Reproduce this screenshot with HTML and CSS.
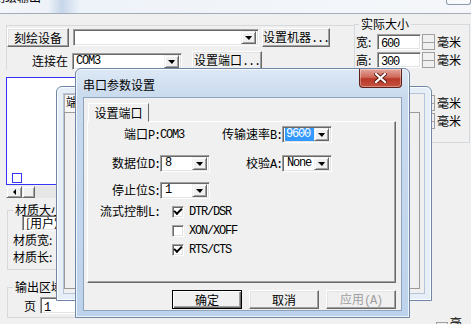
FILE: index.html
```html
<!DOCTYPE html>
<html lang="zh-CN">
<head>
  <meta charset="UTF-8" />
  <link rel="stylesheet" href="styles.css">
  <title>刻绘输出</title>
</head>
<body>
  <div class="mainwin">
    <div class="caption">
      <span class="caption-text">刻绘输出</span>
      <span class="caption-btn"></span>
    </div>

    <div class="client">
      <div class="leftcol">
        <div class="devbox">
          <div class="row">
            <button class="btn w-dev">刻绘设备</button>
            <div class="combo w-devsel"><span class="combo-text"></span><span class="drop"></span></div>
            <button class="btn w-setdev">设置机器<span class="lat">...</span></button>
          </div>
          <div class="row r-port">
            <span class="lbl w-conn">连接在</span>
            <div class="combo w-port"><span class="combo-text lat">COM3</span><span class="drop"></span></div>
            <button class="btn w-setport">设置端口<span class="lat">...</span></button>
          </div>
        </div>

        <div class="preview"><span class="marker"></span></div>
        <div class="hscroll"><span class="sb-arrow"></span><span class="sb-thumb"></span></div>

        <fieldset class="group g-mat">
          <legend>材质大小</legend>
          <div class="edit w-mat">[用户定义]</div>
          <div class="frow">材质宽:</div>
          <div class="frow">材质长:</div>
        </fieldset>

        <fieldset class="group g-out">
          <legend>输出区域</legend>
          <div class="frow r-page">
            <span class="lbl w-page">页</span>
            <div class="edit w-pagenum"><span class="lat">1</span></div>
          </div>
        </fieldset>
      </div>

      <div class="rightcol">
        <fieldset class="group g-size">
          <legend>实际大小</legend>
          <div class="srow">
            <span class="lbl w-dim">宽:</span>
            <div class="edit w-num"><span class="lat">600</span></div>
            <span class="spin"></span>
            <span class="unit">毫米</span>
          </div>
          <div class="srow">
            <span class="lbl w-dim">高:</span>
            <div class="edit w-num"><span class="lat">300</span></div>
            <span class="spin"></span>
            <span class="unit">毫米</span>
          </div>
          <div class="srow r-gap">
            <span class="lbl w-dim">宽:</span>
            <div class="edit w-num"></div>
            <span class="spin"></span>
            <span class="unit">毫米</span>
          </div>
          <div class="srow">
            <span class="lbl w-dim">高:</span>
            <div class="edit w-num"></div>
            <span class="spin"></span>
            <span class="unit">毫米</span>
          </div>
        </fieldset>
        <div class="srow r-bottom">
          <span class="spin"></span>
          <span class="unit">毫米</span>
        </div>
      </div>
    </div>
  </div>

  <!-- window left behind the port dialog -->
  <div class="dlg dlg-back">
    <div class="back-client">
      <div class="back-tab">端口</div>
      <div class="back-page"></div>
    </div>
  </div>

  <div class="dlg dlg-front">
    <div class="dlg-title">
      <span>串口参数设置</span>
      <span class="close-btn">
        <svg width="13" height="10" viewBox="0 0 13 10">
          <path d="M2 1 L11 9 M11 1 L2 9" stroke="#5a1a14" stroke-width="4" stroke-linecap="square"/>
          <path d="M2 1 L11 9 M11 1 L2 9" stroke="#fff" stroke-width="2.2" stroke-linecap="square"/>
        </svg>
      </span>
    </div>

    <div class="dlg-client">
      <div class="tabs">
        <div class="tab">设置端口</div>
      </div>
      <div class="tabpage">
        <div class="prow">
          <span class="plbl">端口<span class="lat">P:</span></span>
          <span class="pval lat">COM3</span>
          <span class="plbl">传输速率<span class="lat">B:</span></span>
          <div class="combo"><span class="combo-text has-sel"><span class="sel lat">9600</span></span><span class="drop"></span></div>
        </div>
        <div class="prow r2">
          <span class="plbl">数据位<span class="lat">D:</span></span>
          <div class="combo"><span class="combo-text lat">8</span><span class="drop"></span></div>
          <span class="plbl">校验<span class="lat">A:</span></span>
          <div class="combo"><span class="combo-text lat">None</span><span class="drop"></span></div>
        </div>
        <div class="prow r3">
          <span class="plbl">停止位<span class="lat">S:</span></span>
          <div class="combo"><span class="combo-text lat">1</span><span class="drop"></span></div>
        </div>
        <div class="prow r4">
          <span class="plbl">流式控制<span class="lat">L:</span></span>
          <label class="check"><span class="chk on"></span><span class="lat">DTR/DSR</span></label>
        </div>
        <div class="prow r5">
          <span></span>
          <label class="check"><span class="chk"></span><span class="lat">XON/XOFF</span></label>
        </div>
        <div class="prow r5">
          <span></span>
          <label class="check"><span class="chk on"></span><span class="lat">RTS/CTS</span></label>
        </div>
      </div>

      <div class="dlg-buttons">
        <button class="btn dbtn default">确定</button>
        <button class="btn dbtn">取消</button>
        <button class="btn dbtn disabled">应用<span class="lat">(A)</span></button>
      </div>
    </div>
  </div>
</body>
</html>
```

FILE: styles.css
```css
* {
  box-sizing: border-box;
}
html, body {
  margin: 0;
}
body {
  width: 471px;
  height: 324px;
  overflow: hidden;
  position: relative;
  background: #f0f0f0;
  font: 12px/14px "Noto Sans CJK SC", sans-serif;
  color: #000;
}
.lat {
  font-family: "Liberation Mono", monospace;
  font-size: 12px;
  letter-spacing: -1.2px;
}

/* main window */
.mainwin {
  height: 324px;
  overflow: hidden;
}
.caption {
  height: 14px;
  display: flex;
  align-items: flex-start;
  overflow: hidden;
  border-bottom: 1px solid #a3adb9;
  background: linear-gradient(90deg, #f3f6fa 0, #eef2f8 48px, #c6d6ea 62px, #eef3f9 80px, #f5f7fa 100%);
}
.caption-text {
  margin: -10px 0 0 -7px;
  line-height: 14px;
}
.caption-btn {
  margin-left: auto;
  width: 25px;
  height: 5px;
  border: 1px solid #8d9aab;
  border-top: 0;
  border-radius: 0 0 3px 3px;
  background: #f8fafc;
}
.client {
  display: grid;
  grid-template-columns: 354px 117px;
}
.leftcol {
  padding-left: 6px;
}
.devbox {
  margin-top: 11px;
  border-top: 1px solid #d5dadf;
  border-left: 1px solid #d5dadf;
  padding-top: 2px;
}
.row {
  display: flex;
  align-items: center;
  height: 19px;
}
.r-port {
  margin-top: 4px;
}
.lbl {
  white-space: nowrap;
}
.w-dev { width: 62px; }
.w-devsel { width: 186px; margin-left: 4px; }
.w-setdev { width: 68px; margin-left: 3px; }
.w-conn { width: 61px; text-align: right; }
.w-port { width: 110px; margin-left: 4px; align-self: flex-end; }
.w-setport { width: 70px; margin-left: 10px; height: 17px; align-self: flex-start; }

.btn {
  font: inherit;
  height: 19px;
  padding: 0;
  color: #000;
  background: #f0f0f0;
  border: 1px solid;
  border-color: #fff #696969 #696969 #fff;
  box-shadow: inset -1px -1px #a0a0a0, inset 1px 1px #e3e3e3;
  white-space: nowrap;
}

.combo {
  display: flex;
  height: 17px;
  padding: 1px 2px;
  background: #fff;
  border: 1px solid;
  border-color: #a0a0a0 #fff #fff #a0a0a0;
  box-shadow: inset 1px 1px #696969, inset -1px -1px #e3e3e3;
}
.combo-text {
  flex: 1;
  padding-left: 1px;
  line-height: 13px;
  white-space: nowrap;
  overflow: hidden;
}
.drop {
  width: 15px;
  display: flex;
  align-items: center;
  justify-content: center;
  background: #f0f0f0;
  border: 1px solid;
  border-color: #f0f0f0 #696969 #696969 #f0f0f0;
  box-shadow: inset 1px 1px #fff, inset -1px -1px #a0a0a0;
}
.drop::after {
  content: "";
  border-top: 4px solid #000;
  border-left: 4px solid transparent;
  border-right: 3px solid transparent;
}

.edit {
  height: 17px;
  padding: 0 3px;
  line-height: 15px;
  background: #fff;
  border: 1px solid;
  border-color: #a0a0a0 #fff #fff #a0a0a0;
  box-shadow: inset 1px 1px #696969, inset -1px -1px #e3e3e3;
  white-space: nowrap;
  overflow: hidden;
}

.preview {
  margin-top: 7px;
  width: 240px;
  height: 108px;
  background: #fff;
  border: 1px solid #3434f4;
  display: flex;
  align-items: flex-end;
  padding: 0 0 1px 5px;
}
.marker {
  width: 10px;
  height: 10px;
  border: 1px solid #3434f4;
}
.hscroll {
  margin-top: 1px;
  width: 240px;
  height: 12px;
  display: flex;
  background: #e6e6e6;
}
.sb-arrow, .sb-thumb {
  background: #f0f0f0;
  border: 1px solid;
  border-color: #f0f0f0 #696969 #696969 #f0f0f0;
  box-shadow: inset 1px 1px #fff, inset -1px -1px #a0a0a0;
  display: flex;
  align-items: center;
  justify-content: center;
}
.sb-arrow {
  width: 16px;
}
.sb-arrow::after {
  content: "";
  border-right: 3px solid #000;
  border-top: 3px solid transparent;
  border-bottom: 3px solid transparent;
}
.sb-thumb {
  width: 13px;
}

.group {
  margin: 0;
  padding: 0;
  border: 1px solid #d5dadf;
  min-width: 0;
}
.group legend {
  padding: 0 2px;
  line-height: 12px;
}
.g-mat {
  margin: 6px 0 0 1px;
  width: 240px;
  padding: 0 0 4px 0;
}
.g-mat legend {
  margin-left: 5px;
  margin-bottom: -1px;
}
.w-mat {
  margin-left: 14px;
  width: 120px;
  height: 16px;
  line-height: 14px;
}
.frow {
  display: flex;
  align-items: center;
  height: 17px;
  padding-left: 5px;
}
.g-mat .frow:first-of-type {
  margin-top: 5px;
}
.g-out {
  margin: 11px 0 0 1px;
  width: 240px;
  height: 37px;
}
.g-out legend {
  margin-left: 5px;
}
.r-page {
  margin-top: 4px;
}
.w-page {
  width: 25px;
  text-align: right;
  padding-right: 2px;
}
.w-pagenum {
  width: 100px;
  margin-left: 2px;
}

.rightcol {
  padding-top: 4px;
}
.g-size {
  height: 125px;
  margin-right: 1px;
}
.g-size legend {
  margin-left: 4px;
}
.srow {
  display: flex;
  align-items: center;
  height: 16px;
  margin-top: 2px;
}
.g-size legend + .srow {
  margin-top: 4px;
}
.srow.r-gap {
  margin-top: 27px;
}
.srow.r-bottom {
  margin-top: 179px;
  padding-left: 81px;
}
.w-dim {
  width: 22px;
  padding-left: 1px;
}
.w-num {
  width: 44px;
  height: 16px;
  line-height: 14px;
}
.spin {
  width: 13px;
  height: 16px;
  margin-left: 1px;
  background: linear-gradient(#f0f0f0 7px, #a0a0a0 7px, #a0a0a0 8px, #f0f0f0 8px);
  border: 1px solid #a0a0a0;
}
.unit {
  margin-left: 2px;
}

/* dialogs */
.dlg {
  position: absolute;
  display: flex;
  flex-direction: column;
  border: 1px solid #6f87a6;
  border-radius: 6px 6px 0 0;
}
.dlg-back {
  left: 56px;
  top: 86px;
  width: 376px;
  height: 215px;
  padding: 6px;
  background: #e6eef8;
  box-shadow: inset 0 0 0 1px #fdfeff;
}
.back-client {
  flex: 1;
  background: #f0f0f0;
  border: 1px solid #b5c4d6;
  display: flex;
  flex-direction: column;
}
.back-tab {
  width: 70px;
  height: 18px;
  padding: 0 0 0 1px;
  background: #f7f7f7;
  border: 1px solid #b0b0b0;
  border-bottom: 0;
}
.back-page {
  flex: 1;
  margin: 0 4px 4px 0;
  border: 1px solid #9a9a9a;
}

.dlg-front {
  left: 75px;
  top: 68px;
  width: 335px;
  height: 250px;
  padding: 0 7px 6px;
  background: linear-gradient(#dde8f5, #c9daee 28px, #bdd3ec);
  box-shadow: inset 0 0 0 1px rgba(255, 255, 255, 0.75);
}
.dlg-title {
  height: 28px;
  display: flex;
  align-items: flex-start;
}
.dlg-title > span:first-child {
  margin-top: 9px;
}
.close-btn {
  margin-left: auto;
  width: 43px;
  height: 19px;
  display: flex;
  align-items: center;
  justify-content: center;
  border: 1px solid #5e2019;
  border-top: 0;
  border-radius: 0 0 4px 4px;
  background: linear-gradient(#e3a79e, #cf6a5b 45%, #b8382a 55%, #c4523f);
  box-shadow: inset 0 0 0 1px rgba(255, 255, 255, 0.35);
}
.dlg-client {
  flex: 1;
  background: #f0f0f0;
  border: 1px solid #8ea3bd;
  padding: 5px 5px 0 3px;
  display: flex;
  flex-direction: column;
}
.tabs {
  display: flex;
  height: 18px;
}
.tab {
  margin-left: 1px;
  width: 61px;
  height: 19px;
  text-align: center;
  padding-top: 2px;
  background: #f0f0f0;
  border: 1px solid;
  border-color: #fff #696969 transparent #fff;
  position: relative;
  z-index: 1;
}
.tabpage {
  height: 162px;
  padding-top: 4px;
  border: 1px solid;
  border-color: #fff #696969 #696969 #fff;
  box-shadow: inset -1px -1px #a0a0a0;
}
.prow {
  display: grid;
  grid-template-columns: 72px 50px 72px 50px;
  align-items: center;
  height: 17px;
}
.prow.r2 { margin-top: 12px; }
.prow.r3 { margin-top: 10px; }
.prow.r4 { margin-top: 4px; }
.prow.r5 { margin-top: 2px; }
.plbl {
  text-align: right;
  white-space: nowrap;
}
.prow .combo-text {
  padding-left: 2px;
}
.prow .combo-text.has-sel {
  display: flex;
  padding-left: 0;
}
.sel {
  flex: 1;
  display: block;
  height: 13px;
  line-height: 13px;
  padding-left: 1px;
  background: #3399ff;
  color: #fff;
}
.check {
  grid-column: 2 / 5;
  display: flex;
  align-items: center;
  margin-left: 12px;
}
.chk {
  width: 12px;
  height: 12px;
  margin-right: 5px;
  background: #fff;
  border: 1px solid;
  border-color: #a0a0a0 #fff #fff #a0a0a0;
  box-shadow: inset 1px 1px #696969, inset -1px -1px #e3e3e3;
  display: flex;
  align-items: center;
  justify-content: center;
}
.chk.on::after {
  content: "";
  width: 6px;
  height: 3px;
  margin-top: -2px;
  border-left: 2px solid #000;
  border-bottom: 2px solid #000;
  transform: rotate(-45deg);
}
.dlg-buttons {
  display: flex;
  justify-content: flex-end;
  gap: 7px;
  margin-top: 7px;
}
.dbtn {
  width: 70px;
  height: 19px;
}
.dbtn.default {
  border-color: #000;
  box-shadow: inset 1px 1px #fff, inset -1px -1px #696969, inset -2px -2px #a0a0a0;
}
.dbtn.disabled {
  color: #a0a0a0;
}
```
